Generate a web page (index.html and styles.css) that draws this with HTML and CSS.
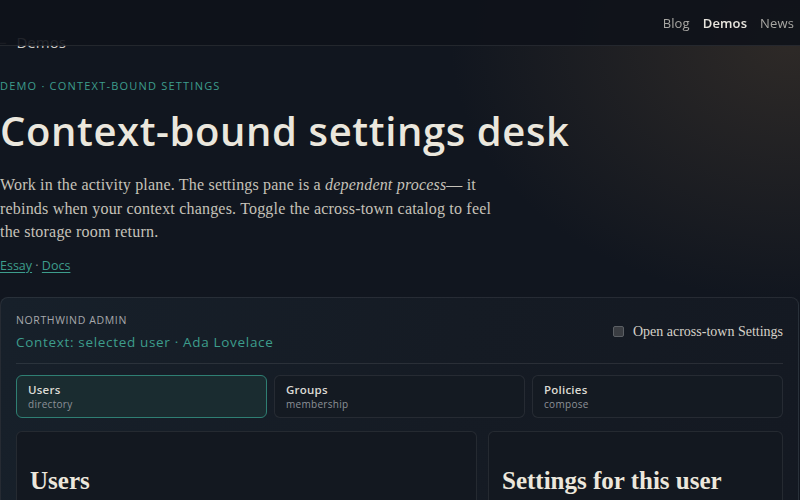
FILE: index.html
```html
<!DOCTYPE html>
<html lang="en">
<head>
<meta charset="utf-8">
<title>Context-bound settings desk</title>
<link rel="stylesheet" href="styles.css">
</head>
<body>
<header class="topbar">
  <nav class="nav">
    <a class="nav-link" href="#">Blog</a>
    <a class="nav-link is-current" href="#">Demos</a>
    <a class="nav-link" href="#">News</a>
  </nav>
</header>
<main class="page">
  <a class="crumb" href="#"><span class="crumb-arrow">←</span> Demos</a>
  <p class="eyebrow">DEMO · CONTEXT-BOUND SETTINGS</p>
  <h1 class="title">Context-bound settings desk</h1>
  <p class="lede">Work in the activity plane. The settings pane is a <em>dependent process</em>— it rebinds when your context changes. Toggle the across-town catalog to feel the storage room return.</p>
  <p class="links"><a href="#">Essay</a> · <a href="#">Docs</a></p>

  <section class="desk">
    <div class="desk-head">
      <div class="desk-id">
        <div class="desk-org">NORTHWIND ADMIN</div>
        <div class="desk-context">Context: selected user · Ada Lovelace</div>
      </div>
      <label class="toggle"><span class="box"></span>Open across-town Settings</label>
    </div>
    <div class="tabs">
      <button class="tab is-active"><span class="tab-name">Users</span><span class="tab-sub">directory</span></button>
      <button class="tab"><span class="tab-name">Groups</span><span class="tab-sub">membership</span></button>
      <button class="tab"><span class="tab-name">Policies</span><span class="tab-sub">compose</span></button>
    </div>
    <div class="panes">
      <div class="pane"><h2 class="pane-title">Users</h2></div>
      <div class="pane"><h2 class="pane-title">Settings for this user</h2></div>
    </div>
  </section>
</main>
</body>
</html>
```

FILE: styles.css
```css
* { box-sizing: border-box; }
html, body { margin: 0; padding: 0; }
body {
  background:
    radial-gradient(ellipse 340px 260px at 790px 40px, rgba(70, 58, 46, 0.55), rgba(70, 58, 46, 0) 100%),
    #11161f;
  color: #c9c5bc;
  font-family: "Open Sans", "DejaVu Sans", sans-serif;
  overflow: hidden;
  height: 500px;
}
a { color: inherit; }

.topbar {
  position: fixed;
  top: 0; left: 0; right: 0;
  height: 46px;
  background: rgba(14, 18, 25, 0.9);
  border-bottom: 1px solid rgba(255, 255, 255, 0.09);
  display: flex;
  justify-content: flex-end;
  align-items: center;
  padding-right: 6px;
  z-index: 10;
}
.nav { display: flex; gap: 13px; }
.nav-link {
  text-decoration: none;
  font-size: 13px;
  color: #a9a8a4;
  letter-spacing: 0.01em;
}
.nav-link.is-current { color: #e8e5de; font-weight: 600; }

.page { padding: 32px 1px 0 0; }
.crumb {
  display: block;
  margin-left: -6px;
  font-size: 15px;
  color: #cfcdc8;
  text-decoration: none;
  line-height: 20px;
}
.crumb-arrow { color: #777; margin-right: 6px; }

.eyebrow {
  margin: 27px 0 0;
  font-size: 11px;
  letter-spacing: 0.11em;
  color: #3d9d8c;
  line-height: 14px;
}
.title {
  margin: 14px 0 0;
  font-size: 40px;
  line-height: 48px;
  font-weight: 600;
  color: #ebe7dd;
  letter-spacing: 0.015em;
}
.lede {
  margin: 18px 0 0;
  max-width: 500px;
  font-family: "Liberation Serif", "DejaVu Serif", serif;
  font-size: 16px;
  letter-spacing: 0.012em;
  line-height: 23.5px;
  color: #c6c2b9;
}
.lede em { font-style: italic; }
.links {
  margin: 13px 0 0;
  font-size: 12.5px;
  color: #8b8f94;
  line-height: 18px;
}
.links a { color: #3d9d8c; text-decoration: underline; text-underline-offset: 2px; }

.desk {
  margin-top: 22px;
  border: 1px solid rgba(255, 255, 255, 0.08);
  border-radius: 8px;
  background: linear-gradient(100deg, #17202a 0%, #151b24 55%, #141922 100%);
  padding: 15px 15px 0;
}
.desk-head {
  display: flex;
  justify-content: space-between;
  align-items: center;
  padding-bottom: 12px;
  border-bottom: 1px solid rgba(255, 255, 255, 0.09);
}
.desk-org {
  font-size: 10.5px;
  letter-spacing: 0.06em;
  color: #a7a9ac;
  line-height: 14px;
}
.desk-context {
  margin-top: 6px;
  font-size: 13.5px;
  letter-spacing: 0.05em;
  color: #3d9d8c;
  line-height: 18px;
}
.toggle {
  display: flex;
  align-items: center;
  gap: 9px;
  font-family: "Liberation Serif", "DejaVu Serif", serif;
  font-size: 14px;
  color: #d6d2c9;
}
.box {
  width: 11px; height: 11px;
  border-radius: 2px;
  background: #3a3d42;
  border: 1px solid #5b5f64;
}

.tabs {
  margin-top: 11px;
  display: grid;
  grid-template-columns: 1fr 1fr 1fr;
  gap: 7px;
}
.tab {
  display: flex;
  flex-direction: column;
  align-items: flex-start;
  text-align: left;
  padding: 7px 11px;
  height: 43px;
  border-radius: 6px;
  border: 1px solid rgba(255, 255, 255, 0.08);
  background: #141a22;
  font-family: "Open Sans", "DejaVu Sans", sans-serif;
  cursor: pointer;
}
.tab.is-active {
  border-color: #2f7f73;
  background: #1a2c30;
}
.tab-name { font-size: 11.5px; font-weight: 600; color: #dcdad4; line-height: 14px; letter-spacing: 0.02em; }
.tab-sub { font-size: 10px; color: #8c9197; line-height: 14px; letter-spacing: 0.03em; }

.panes {
  margin-top: 13px;
  display: grid;
  grid-template-columns: 461px 1fr;
  gap: 11px;
}
.pane {
  border: 1px solid rgba(255, 255, 255, 0.08);
  border-radius: 6px;
  background: #131820;
  padding: 29px 13px 20px;
  min-height: 100px;
}
.pane-title {
  margin: 0;
  font-family: "Liberation Serif", "DejaVu Serif", serif;
  font-weight: 700;
  font-size: 25px;
  line-height: 40px;
  color: #ece7dc;
}
```
